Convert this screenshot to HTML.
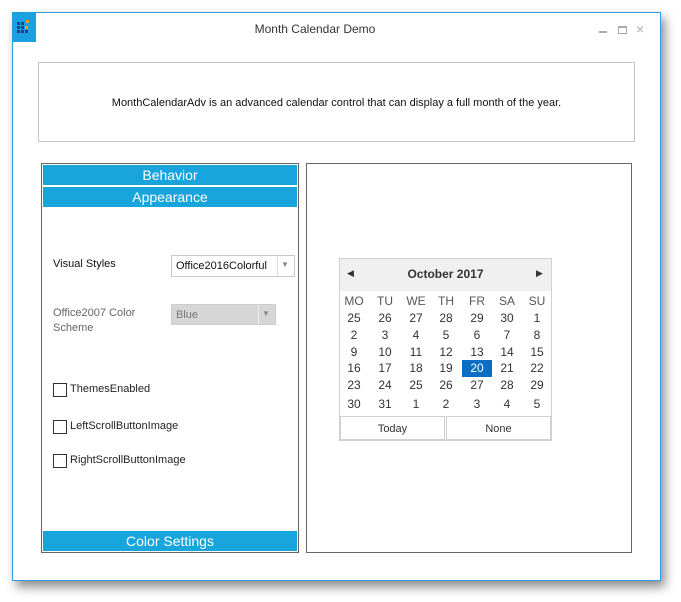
<!DOCTYPE html>
<html><head><meta charset="utf-8"><style>
*{margin:0;padding:0;box-sizing:border-box}
body{width:681px;height:602px;background:#fff;position:relative;overflow:hidden;font-family:"Liberation Sans","DejaVu Sans",sans-serif;font-size:11px;color:#222}
.a{position:absolute}
#win{left:12px;top:12px;width:649px;height:569px;border:1px solid #2a9fdc;background:#fff;box-shadow:4px 6px 10px rgba(0,0,0,.45)}
.hdr{position:absolute;left:43px;width:254px;height:20px;background:#17a5dc;color:#fff;font-size:14px;text-align:center;line-height:21px}
.cb{position:absolute;left:53px;width:14px;height:14px;border:1px solid #333;background:#fff}
.cl{position:absolute;left:70px;font-size:11px;color:#222}
.d{position:absolute;width:30px;text-align:center;font-size:12px;color:#333}
.wd{color:#555}
</style></head><body>
<div id="win" class="a"></div>
<div class="a" style="left:12px;top:12px;width:24px;height:30px;background:#1ba1e2"></div>
<svg class="a" style="left:17px;top:20px" width="14" height="13" viewBox="0 0 14 13">
<g fill="#2b3a8c"><rect x="0" y="2" width="3" height="3"/><rect x="4" y="2" width="3" height="3"/><rect x="0" y="6" width="3" height="3"/><rect x="4" y="6" width="3" height="3"/><rect x="0" y="10" width="3" height="3"/><rect x="4" y="10" width="3" height="3"/><rect x="8" y="10" width="3" height="3"/></g>
<rect x="8" y="6" width="3" height="3" fill="#f39c12"/><rect x="9" y="0" width="3" height="3" fill="#f39c12"/></svg>
<div class="a" style="left:0;width:630px;top:22px;text-align:center;font-size:12px;color:#333">Month Calendar Demo</div>
<div class="a" style="left:599px;top:31px;width:8px;height:2px;background:#aaa"></div>
<div class="a" style="left:618px;top:26px;width:9px;height:8px;border:1px solid #aaa;border-top-width:2px"></div>
<div class="a" style="left:636px;top:21px;font-size:14px;color:#aaa">×</div>

<div class="a" style="left:38px;top:62px;width:597px;height:80px;border:1px solid #c4c4c4"></div>
<div class="a" style="left:38px;width:597px;top:97px;text-align:center;font-size:11px;color:#111">MonthCalendarAdv is an advanced calendar control that can display a full month of the year.</div>

<div class="a" style="left:41px;top:163px;width:258px;height:390px;border:1px solid #666"></div>
<div class="hdr" style="top:165px">Behavior</div>
<div class="hdr" style="top:187px">Appearance</div>
<div class="hdr" style="top:531px">Color Settings</div>

<div class="a" style="left:53px;top:258px;font-size:11px;color:#111">Visual Styles</div>
<div class="a" style="left:171px;top:255px;width:124px;height:22px;border:1px solid #c8c8c8;background:#fff"></div>
<div class="a" style="left:176px;top:260px;font-size:11px;color:#111">Office2016Colorful</div>
<div class="a" style="left:277px;top:256px;width:1px;height:20px;background:#ddd"></div>
<div class="a" style="left:281px;top:260px;font-size:8px;color:#888">▼</div>

<div class="a" style="left:53px;top:306px;font-size:11px;color:#666;line-height:15px">Office2007 Color<br>Scheme</div>
<div class="a" style="left:171px;top:304px;width:105px;height:21px;background:#d6d6d6;border:1px solid #ccc"></div>
<div class="a" style="left:176px;top:309px;font-size:11px;color:#777">Blue</div>
<div class="a" style="left:258px;top:305px;width:1px;height:19px;background:#eee"></div>
<div class="a" style="left:262px;top:309px;font-size:8px;color:#888">▼</div>

<div class="cb" style="top:383px"></div><div class="cl" style="top:383px">ThemesEnabled</div>
<div class="cb" style="top:420px"></div><div class="cl" style="top:420px">LeftScrollButtonImage</div>
<div class="cb" style="top:454px"></div><div class="cl" style="top:454px">RightScrollButtonImage</div>

<div class="a" style="left:306px;top:163px;width:326px;height:390px;border:1px solid #666"></div>

<div class="a" style="left:339px;top:258px;width:213px;height:183px;border:1px solid #d0d0d0;background:#fff"></div>
<div class="a" style="left:340px;top:259px;width:211px;height:32px;background:#f0f0f0"></div>
<div class="a" style="left:347px;top:268px;font-size:9px;color:#333">◀</div>
<div class="a" style="left:536px;top:268px;font-size:9px;color:#333">▶</div>
<div class="a" style="left:340px;width:211px;top:267px;text-align:center;font-size:12px;font-weight:bold;color:#333">October 2017</div>
<div class="a" style="left:462px;top:360px;width:30px;height:17px;background:#0a6fc2"></div>
<div class="a" style="left:340px;top:416px;width:105px;height:24px;border:1px solid #d0d0d0;text-align:center;line-height:24px;font-size:11px;color:#333">Today</div>
<div class="a" style="left:446px;top:416px;width:105px;height:24px;border:1px solid #d0d0d0;text-align:center;line-height:24px;font-size:11px;color:#333">None</div>

<div class="d wd" style="left:339px;top:294px">MO</div><div class="d wd" style="left:370px;top:294px">TU</div><div class="d wd" style="left:401px;top:294px">WE</div><div class="d wd" style="left:431px;top:294px">TH</div><div class="d wd" style="left:462px;top:294px">FR</div><div class="d wd" style="left:492px;top:294px">SA</div><div class="d wd" style="left:522px;top:294px">SU</div>
<div class="d" style="left:339px;top:311px">25</div><div class="d" style="left:370px;top:311px">26</div><div class="d" style="left:401px;top:311px">27</div><div class="d" style="left:431px;top:311px">28</div><div class="d" style="left:462px;top:311px">29</div><div class="d" style="left:492px;top:311px">30</div><div class="d" style="left:522px;top:311px">1</div>
<div class="d" style="left:339px;top:328px">2</div><div class="d" style="left:370px;top:328px">3</div><div class="d" style="left:401px;top:328px">4</div><div class="d" style="left:431px;top:328px">5</div><div class="d" style="left:462px;top:328px">6</div><div class="d" style="left:492px;top:328px">7</div><div class="d" style="left:522px;top:328px">8</div>
<div class="d" style="left:339px;top:345px">9</div><div class="d" style="left:370px;top:345px">10</div><div class="d" style="left:401px;top:345px">11</div><div class="d" style="left:431px;top:345px">12</div><div class="d" style="left:462px;top:345px">13</div><div class="d" style="left:492px;top:345px">14</div><div class="d" style="left:522px;top:345px">15</div>
<div class="d" style="left:339px;top:361px">16</div><div class="d" style="left:370px;top:361px">17</div><div class="d" style="left:401px;top:361px">18</div><div class="d" style="left:431px;top:361px">19</div><div class="d" style="left:462px;top:361px;color:#fff">20</div><div class="d" style="left:492px;top:361px">21</div><div class="d" style="left:522px;top:361px">22</div>
<div class="d" style="left:339px;top:378px">23</div><div class="d" style="left:370px;top:378px">24</div><div class="d" style="left:401px;top:378px">25</div><div class="d" style="left:431px;top:378px">26</div><div class="d" style="left:462px;top:378px">27</div><div class="d" style="left:492px;top:378px">28</div><div class="d" style="left:522px;top:378px">29</div>
<div class="d" style="left:339px;top:397px">30</div><div class="d" style="left:370px;top:397px">31</div><div class="d" style="left:401px;top:397px">1</div><div class="d" style="left:431px;top:397px">2</div><div class="d" style="left:462px;top:397px">3</div><div class="d" style="left:492px;top:397px">4</div><div class="d" style="left:522px;top:397px">5</div>
</body></html>
